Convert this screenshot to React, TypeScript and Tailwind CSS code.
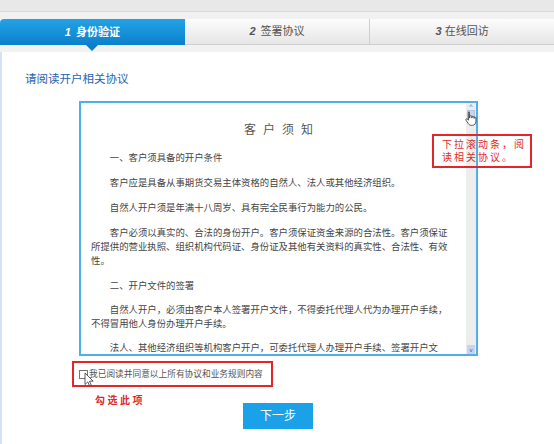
import React from "react";

const paras: React.ReactNode[] = [
  "客户应是具备从事期货交易主体资格的自然人、法人或其他经济组织。",
  "自然人开户须是年满十八周岁、具有完全民事行为能力的公民。",
  <>
    客户必须以真实的、合法的身份开户。客户须保证资金来源的合法性。客户须保证
    <br />
    所提供的营业执照、组织机构代码证、身份证及其他有关资料的真实性、合法性、有效
    <br />
    性。
  </>,
];
const paras2: string[] = [
  "自然人开户，必须由客户本人签署开户文件，不得委托代理人代为办理开户手续，不得冒用他人身份办理开户手续。",
  "法人、其他经济组织等机构客户开户，可委托代理人办理开户手续、签署开户文件，但须出具合法有效的授权委托书及代理人身份证明文件。",
];

function HandCursor() {
  return (
    <svg width="12" height="15" viewBox="0 0 12 15" className="absolute left-[465px] top-[111px]">
      <path
        d="M3.5 1.2c.6 0 1 .4 1 1V7h.3V5.6c0-.6.4-1 1-1s1 .4 1 1V7h.2V6.2c0-.6.4-1 1-1s1 .4 1 1V7.4h.1V6.9c0-.6.4-.9.9-.9s.9.4.9.9v3.5c0 2.2-1.4 3.9-3.5 3.9H6.2c-1.3 0-2.1-.6-2.8-1.6L1 9.3c-.4-.5-.3-1.1.1-1.4.4-.3 1-.2 1.4.2l.9 1.1V2.2c0-.6.4-1 1-1z"
        fill="#fff"
        stroke="#333"
        strokeWidth="0.8"
      />
    </svg>
  );
}

function ArrowCursor() {
  return (
    <svg width="10" height="15" viewBox="0 0 10 15" className="absolute left-[84px] top-[372px]">
      <path d="M1 1v11.5l2.8-2.6 1.8 4.1 1.7-.8-1.8-4h3.7z" fill="#fff" stroke="#333" strokeWidth="0.8" />
    </svg>
  );
}

export default function App() {
  return (
    <div className="relative w-[554px] h-[444px] overflow-hidden bg-white font-['Liberation_Sans','Noto_Sans_CJK_SC',sans-serif]">
      {/* top bands */}
      <div className="h-[12px] bg-[#e8e8e8] border-b border-[#d9d9d9]" />
      <div className="h-[7px] bg-[#f1f1f1]" />
      {/* tabs */}
      <div className="grid grid-cols-3 h-[26px]">
        <div className="relative flex items-center justify-center rounded-tl-[4px] bg-gradient-to-b from-[#23a3e6] to-[#0a80cb] text-white text-[11px] font-bold">
          <span className="italic mr-[5px]">1</span>
          <span>身份验证</span>
          <div className="absolute left-[86px] top-full w-0 h-0 border-l-[6px] border-r-[6px] border-t-[6px] border-l-transparent border-r-transparent border-t-[#0a7fc8]" />
        </div>
        <div className="flex items-center justify-center bg-gradient-to-b from-[#fcfcfc] to-[#e6e6e6] border-b border-[#cfcfcf] text-[#555] text-[11px]">
          <span className="italic font-bold mr-[5px]">2</span>
          <span>签署协议</span>
        </div>
        <div className="flex items-center justify-center bg-gradient-to-b from-[#fcfcfc] to-[#e6e6e6] border-b border-l border-[#cfcfcf] text-[#555] text-[11px]">
          <span className="italic font-bold mr-[3px]">3</span>
          <span>在线回访</span>
        </div>
      </div>
      <div className="h-[7px] bg-[#f2f2f2]" />

      {/* content */}
      <div className="border-l-2 border-[#d3e3f3] h-[392px] pt-[19px] flex flex-col">
        <div className="pl-[23px] text-[11.5px] leading-[16px] text-[#1f63b3]">请阅读开户相关协议</div>

        <div className="mt-[14px] ml-[77px] w-[399px] h-[255px] border-2 border-[#4fb0e8] flex">
          <div className="flex-1 overflow-hidden pl-[10px] pt-[19px] text-[#444]">
            <div className="text-[12px] leading-[16px] text-center tracking-[7px] pl-[7px] text-[#555]">客户须知</div>
            <div className="w-[360px] text-[9.4px] leading-[14px]">
              <p className="mt-[13px] indent-[2em]">一、客户须具备的开户条件</p>
              {paras.map((t, i) => (
                <p key={i} className="mt-[11px] indent-[2em]">{t}</p>
              ))}
              <p className="mt-[11px] indent-[2em]">二、开户文件的签署</p>
              {paras2.map((t, i) => (
                <p key={i} className="mt-[10px] indent-[2em]">{t}</p>
              ))}
            </div>
          </div>
          {/* scrollbar */}
          <div className="w-[10px] bg-[#ededed] flex flex-col items-stretch">
            <div className="h-[7px] flex items-center justify-center text-[7px] leading-none text-[#4a6fb0]">^</div>
            <div className="h-[13px] mx-[1px] bg-[#c9d5ee] border border-[#b3c3e6]" />
            <div className="flex-1" />
            <div className="h-[9px] mx-[1px] bg-[#c9d3ef] flex items-center justify-center text-[6px] leading-none text-[#3f62a8]">v</div>
          </div>
        </div>

        <div className="mt-[5px] ml-[70px] w-[201px] h-[26px] border-2 border-[#e2262a] flex items-center pl-[5px]">
          <span className="w-[9px] h-[9px] border border-[#777] bg-white mr-[1px]" />
          <span className="text-[8.7px] text-[#555] leading-none">我已阅读并同意以上所有协议和业务规则内容</span>
        </div>

        <button className="mt-[16px] mx-auto w-[70px] h-[26px] bg-[#1ba1e7] text-white text-[12px] flex items-center justify-center">
          下一步
        </button>
      </div>

      {/* annotations */}
      <div className="absolute left-[432px] top-[134px] w-[100px] h-[34px] border-2 border-[#e2262a] pl-[8px] pt-[2px] text-[10px] leading-[13px] tracking-[2px] text-[#e0282c]">
        <div>下拉滚动条，阅</div>
        <div>读相关协议。</div>
      </div>
      <div className="absolute left-[95px] top-[394px] text-[10px] leading-[14px] font-bold tracking-[2.5px] text-[#e0282c]">勾选此项</div>
      <HandCursor />
      <ArrowCursor />
    </div>
  );
}
